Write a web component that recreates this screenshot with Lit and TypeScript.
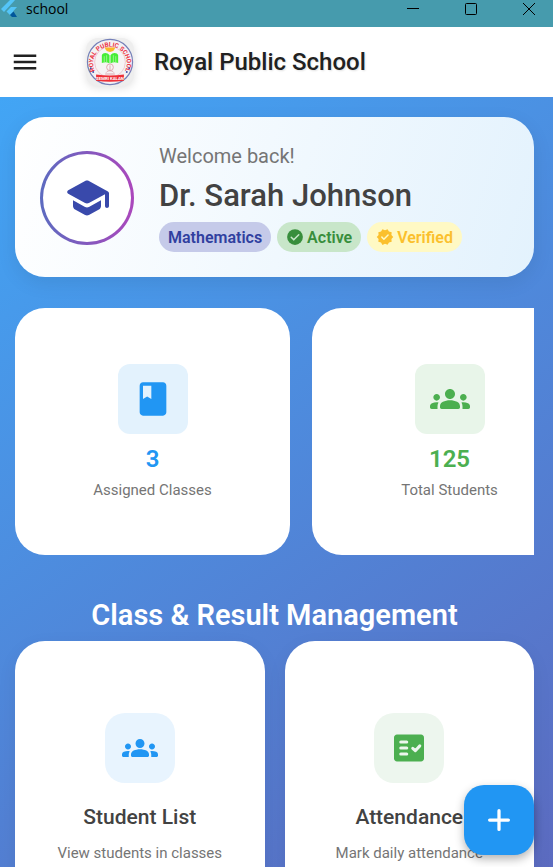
import { LitElement, html, svg, css } from "lit";
import { customElement, property } from "lit/decorators.js";

const groupsIcon = svg`<path d="M12 12.75c1.63 0 3.07.39 4.24.9 1.08.48 1.76 1.56 1.76 2.73V17c0 .55-.45 1-1 1H7c-.55 0-1-.45-1-1v-.61c0-1.18.68-2.26 1.76-2.73 1.17-.52 2.61-.91 4.24-.91zM4 13c1.1 0 2-.9 2-2s-.9-2-2-2-2 .9-2 2 .9 2 2 2zm1.13 1.1c-.37-.06-.74-.1-1.13-.1-.99 0-1.93.21-2.78.58C.48 14.9 0 15.62 0 16.43V17c0 .55.45 1 1 1h3.5v-1.61c0-.83.23-1.61.63-2.29zM20 13c1.1 0 2-.9 2-2s-.9-2-2-2-2 .9-2 2 .9 2 2 2zm4 3.43c0-.81-.48-1.53-1.22-1.85-.85-.37-1.79-.58-2.78-.58-.39 0-.76.04-1.13.1.4.68.63 1.46.63 2.29V18H23c.55 0 1-.45 1-1v-.57zM12 6c1.66 0 3 1.34 3 3s-1.34 3-3 3-3-1.34-3-3 1.34-3 3-3z"/>`;

const icons: Record<string, unknown> = {
  groups: groupsIcon,
  school: svg`<path d="M5 13.18v2.81c0 .73.4 1.41 1.04 1.76l5 2.73c.6.33 1.32.33 1.92 0l5-2.73c.64-.35 1.04-1.03 1.04-1.76v-2.81l-6.04 3.3c-.6.33-1.32.33-1.92 0L5 13.18zm6.04-9.66l-8.43 4.6c-.69.38-.69 1.38 0 1.76l8.43 4.6c.6.33 1.32.33 1.92 0L21 10.09V16c0 .55.45 1 1 1s1-.45 1-1V9.59c0-.37-.2-.7-.52-.88l-9.52-5.19c-.6-.32-1.32-.32-1.92 0z"/>`,
  book: svg`<path d="M18 2H6c-1.1 0-2 .9-2 2v16c0 1.1.9 2 2 2h12c1.1 0 2-.9 2-2V4c0-1.1-.9-2-2-2zM6 4h5v8l-2.5-1.500L6 12V4z"/>`,
  factCheck: svg`<path d="M20 3H4c-1.1 0-2 .9-2 2v14c0 1.1.9 2 2 2h16c1.1 0 2-.9 2-2V5c0-1.1-.9-2-2-2z"/><path d="M6.500 9H10.500M6.500 13H10.500M6.500 17H10.500M14.500 13.200l1.700 1.600 3-3.200" transform="translate(0 -1)" fill="none" stroke="#edf6ee" stroke-width="2" stroke-linecap="round" stroke-linejoin="round"/>`,
  check: svg`<circle cx="12" cy="12" r="10.500"/><path d="M7 12.300l3.300 3.500 6.700-6.900" fill="none" stroke="#c8e6c9" stroke-width="2" stroke-linecap="round" stroke-linejoin="round"/>`,
  verified: svg`<path d="M23 12l-2.440-2.790.340-3.690-3.610-.820-1.890-3.200L12 2.960 8.600 1.500 6.710 4.690 3.100 5.500l.340 3.700L1 12l2.440 2.790-.340 3.700 3.610.820L8.600 22.500l3.400-1.470 3.400 1.460 1.890-3.190 3.610-.820-.340-3.690z"/><path d="M7.800 12.200l2.700 2.700 5.600-5.600" fill="none" stroke="#fff9c4" stroke-width="2" stroke-linecap="round" stroke-linejoin="round"/>`,
  menu: svg`<path d="M3 18h18v-2H3v2zm0-5h18v-2H3v2zm0-7v2h18V6H3z"/>`,
  add: svg`<path d="M12 4.500v15M4.500 12h15" fill="none" stroke="currentColor" stroke-width="2.600" stroke-linecap="round"/>`,
};

@customElement("md-icon")
class MdIcon extends LitElement {
  @property() name = "";
  static styles = css`
    :host { display: block; flex: none; }
    .glyph { display: block; width: 100%; height: 100%; fill: currentColor; }
  `;
  render() {
    return html`<svg class="glyph" viewBox="0 0 24 24" aria-hidden="true">${icons[this.name]}</svg>`;
  }
}

@customElement("school-crest")
class SchoolCrest extends LitElement {
  static styles = css`
    :host { display: block; flex: none; width: 48px; height: 48px; border-radius: 12px; box-shadow: 0 2px 8px rgba(0, 0, 0, 0.12); background: #eee; }
    .crest { display: block; width: 48px; height: 48px; }
    .ring { font: 700 13px "Roboto", sans-serif; fill: #ee3344; }
    .place { font: 700 9px "Roboto", sans-serif; fill: #fff; text-anchor: middle; }
  `;
  render() {
    return html`<svg class="crest" viewBox="0 0 100 100" role="img" aria-label="Royal Public School crest">
      <defs><path id="arc" d="M19 69A35 35 0 1 1 81 69" /></defs>
      <circle cx="50" cy="50" r="47" fill="#f3f1f4" stroke="#7580b8" stroke-width="2.500" />
      <circle cx="50" cy="50" r="32" fill="#f6f4f5" stroke="#e8a0a8" stroke-width="1" />
      <text class="ring"><textPath href="#arc" startOffset="50%" text-anchor="middle">ROYAL PUBLIC SCHOOL</textPath></text>
      <path d="M39 20h22c-2 7-6 9-11 9s-9-2-11-9z" fill="#fbb829" />
      <path d="M49 53c-5-3-10-3-16-1V36c2-6 11-7 16 0zM51 53c5-3 10-3 16-1V36c-2-6-11-7-16 0z" fill="#45ee35" />
      <path d="M38 50V38M43 50V36M57 50V36M62 50V38" stroke="#b4f7a8" stroke-width="1.500" />
      <g fill="none" stroke="#dfa6ae" stroke-width="2"><circle cx="50" cy="61" r="7" /><path d="M50 57v11M42 72c3-5 13-5 16 0M40 75h20" /></g>
      <g fill="#4050a8"><circle cx="10" cy="63" r="2" /><circle cx="15" cy="71" r="2" /><circle cx="90" cy="63" r="2" /><circle cx="85" cy="71" r="2" /></g>
      <path d="M21 76q29 4 58 0v13q-29 4-58 0z" fill="#ee3038" />
      <text class="place" x="50" y="88">SEMRI KALAN</text>
    </svg>`;
  }
}

const stats = [
  { icon: "book", value: "3", label: "Assigned Classes", tone: "blue" },
  { icon: "groups", value: "125", label: "Total Students", tone: "green" },
];

const tiles = [
  { icon: "groups", title: "Student List", text: "View students in classes", tone: "blue" },
  { icon: "factCheck", title: "Attendance", text: "Mark daily attendance", tone: "green" },
];

@customElement("app-root")
class AppRoot extends LitElement {
  static styles = css`
    :host { display: flex; flex-direction: column; height: 100vh; overflow: hidden; font-family: "Roboto", sans-serif; color: #424242; }
    * { box-sizing: border-box; }
    h1, h2, h3, p { margin: 0; font-weight: 500; }
    button { border: 0; padding: 0; background: none; color: inherit; font: inherit; cursor: pointer; }

    .titlebar { flex: none; display: flex; align-items: center; height: 27px; padding: 0 18px 10px 0; background: #469bad; color: #000; }
    .flutter { flex: none; width: 18px; height: 20px; }
    .window-name { flex: 1; margin-left: 8px; font: 14px/18px "Open Sans", sans-serif; }
    .controls { display: flex; gap: 46px; }
    .control { width: 12px; height: 12px; }
    .control svg { display: block; fill: none; stroke: #000; }

    .appbar { flex: none; display: flex; align-items: center; height: 70px; padding: 0 10px; background: #fff; color: #212121; }
    .menu { width: 30px; height: 30px; }
    .menu md-icon { width: 30px; height: 30px; }
    .appbar school-crest { margin: 0 20px 0 46px; }
    .brand { font-size: 24px; line-height: 32px; text-shadow: 1px 1px 2px rgba(0, 0, 0, 0.12); }

    .page { flex: 1; min-height: 0; overflow-y: auto; scrollbar-width: none; padding: 20px 19px 20px 15px; background: linear-gradient(144deg, #42a5f5, #5c6bc0); }

    .hero { display: flex; align-items: center; gap: 25px; min-height: 160px; padding: 2px 25px 0; border-radius: 30px; background: linear-gradient(107deg, #fff, #e3f2fd); box-shadow: 0 6px 20px rgba(0, 0, 0, 0.08); }
    .avatar { flex: none; padding: 3px; border-radius: 50%; background: linear-gradient(90deg, #5c6bc0, #ab47bc); }
    .avatar-inner { display: grid; place-items: center; width: 88px; height: 88px; border-radius: 50%; background: #fff; color: #3949ab; }
    .avatar md-icon { width: 48px; height: 48px; }
    .welcome { font-size: 20px; line-height: 24px; font-weight: 400; color: #757575; }
    .teacher { margin: 10px 0 8px; font-size: 31px; line-height: 36px; }
    .chips { display: flex; flex-wrap: wrap; gap: 6px; }
    .chip { display: flex; align-items: center; gap: 3px; height: 30px; padding: 0 9px; border-radius: 15px; font-size: 16px; font-weight: 600; }
    .chip md-icon { width: 18px; height: 18px; }
    .subject { background: #c5cae9; color: #303f9f; }
    .active { background: #c8e6c9; color: #388e3c; }
    .verified { background: #fff9c4; color: #fbc02d; }

    .stats { display: flex; gap: 22px; margin-top: 31px; overflow-x: auto; scrollbar-width: none; }
    .stat { flex: none; display: flex; flex-direction: column; align-items: center; width: 275px; padding: 56px 10px 55px; border-radius: 30px; background: #fff; }
    .badge { display: grid; place-items: center; width: 70px; height: 70px; }
    .stat .badge { border-radius: 12px; }
    .stat md-icon { width: 40px; height: 40px; }
    .value { margin-top: 9px; font-size: 24px; line-height: 32px; font-weight: 600; }
    .caption { font-size: 15px; line-height: 20px; font-weight: 400; color: #757575; }
    .stat .caption { margin: 5px 0 0; }
    .blue .badge, .blue .value { color: #2196f3; }
    .green .badge, .green .value { color: #4caf50; }
    .stat.blue .badge { background: #e3f2fd; }
    .stat.green .badge { background: #e8f5e9; }

    .section { margin: 42px 0 8px; font-size: 29px; line-height: 36px; font-weight: 600; text-align: center; color: #fff; }
    .tiles { display: grid; grid-template-columns: 1fr 1fr; gap: 20px; }
    .tile { display: flex; flex-direction: column; align-items: center; justify-content: center; aspect-ratio: 17 / 20; padding: 20px; border-radius: 30px; background: #fff; box-shadow: 0 6px 20px rgba(0, 0, 0, 0.06); }
    .tile .badge { border-radius: 20px; }
    .tile md-icon { width: 36px; height: 36px; }
    .tile.blue .badge { background: #e8f4fe; }
    .tile.green .badge { background: #edf6ee; }
    .tile-title { margin: 20px 0 12px; font-size: 21px; line-height: 28px; }

    .fab { position: fixed; right: 19px; bottom: 12px; display: grid; place-items: center; width: 70px; height: 70px; border-radius: 20px; background: #2196f3; color: #fff; box-shadow: 0 4px 10px rgba(0, 0, 0, 0.3); }
    .fab md-icon { width: 30px; height: 30px; }
  `;

  render() {
    return html`
      <div class="titlebar">
        <svg class="flutter" viewBox="0 0 18 20" aria-hidden="true">
          <path d="M11 0h5L4 13 1 10z" fill="#54c5f8" />
          <path d="M11 8h6l-4 4.500-3.500-3zM6.500 12.500l3.500-3.500 3.500 3.500-3.500 3.500z" fill="#54c5f8" />
          <path d="M10 16l3.500-3.500L17 18h-5z" fill="#01579b" />
        </svg>
        <span class="window-name">school</span>
        <div class="controls">
          <button class="control" aria-label="Minimize"><svg width="12" height="12"><path d="M0 5.500h12" /></svg></button>
          <button class="control" aria-label="Maximize"><svg width="12" height="12"><rect x=".5" y=".5" width="11" height="11" rx="1" /></svg></button>
          <button class="control" aria-label="Close"><svg width="12" height="12"><path d="M0 0l12 12M12 0L0 12" /></svg></button>
        </div>
      </div>
      <header class="appbar">
        <button class="menu" aria-label="Open menu"><md-icon name="menu"></md-icon></button>
        <school-crest></school-crest>
        <h1 class="brand">Royal Public School</h1>
      </header>
      <main class="page">
        <section class="hero">
          <div class="avatar"><div class="avatar-inner"><md-icon name="school"></md-icon></div></div>
          <div>
            <p class="welcome">Welcome back!</p>
            <h2 class="teacher">Dr. Sarah Johnson</h2>
            <div class="chips">
              <span class="chip subject">Mathematics</span>
              <span class="chip active"><md-icon name="check"></md-icon>Active</span>
              <span class="chip verified"><md-icon name="verified"></md-icon>Verified</span>
            </div>
          </div>
        </section>
        <section class="stats">
          ${stats.map((s) => html`<article class="stat ${s.tone}">
            <div class="badge"><md-icon name=${s.icon}></md-icon></div>
            <p class="value">${s.value}</p>
            <p class="caption">${s.label}</p>
          </article>`)}
        </section>
        <h2 class="section">Class &amp; Result Management</h2>
        <section class="tiles">
          ${tiles.map((t) => html`<button class="tile ${t.tone}">
            <span class="badge"><md-icon name=${t.icon}></md-icon></span>
            <h3 class="tile-title">${t.title}</h3>
            <p class="caption">${t.text}</p>
          </button>`)}
        </section>
      </main>
      <button class="fab" aria-label="Add"><md-icon name="add"></md-icon></button>
    `;
  }
}
